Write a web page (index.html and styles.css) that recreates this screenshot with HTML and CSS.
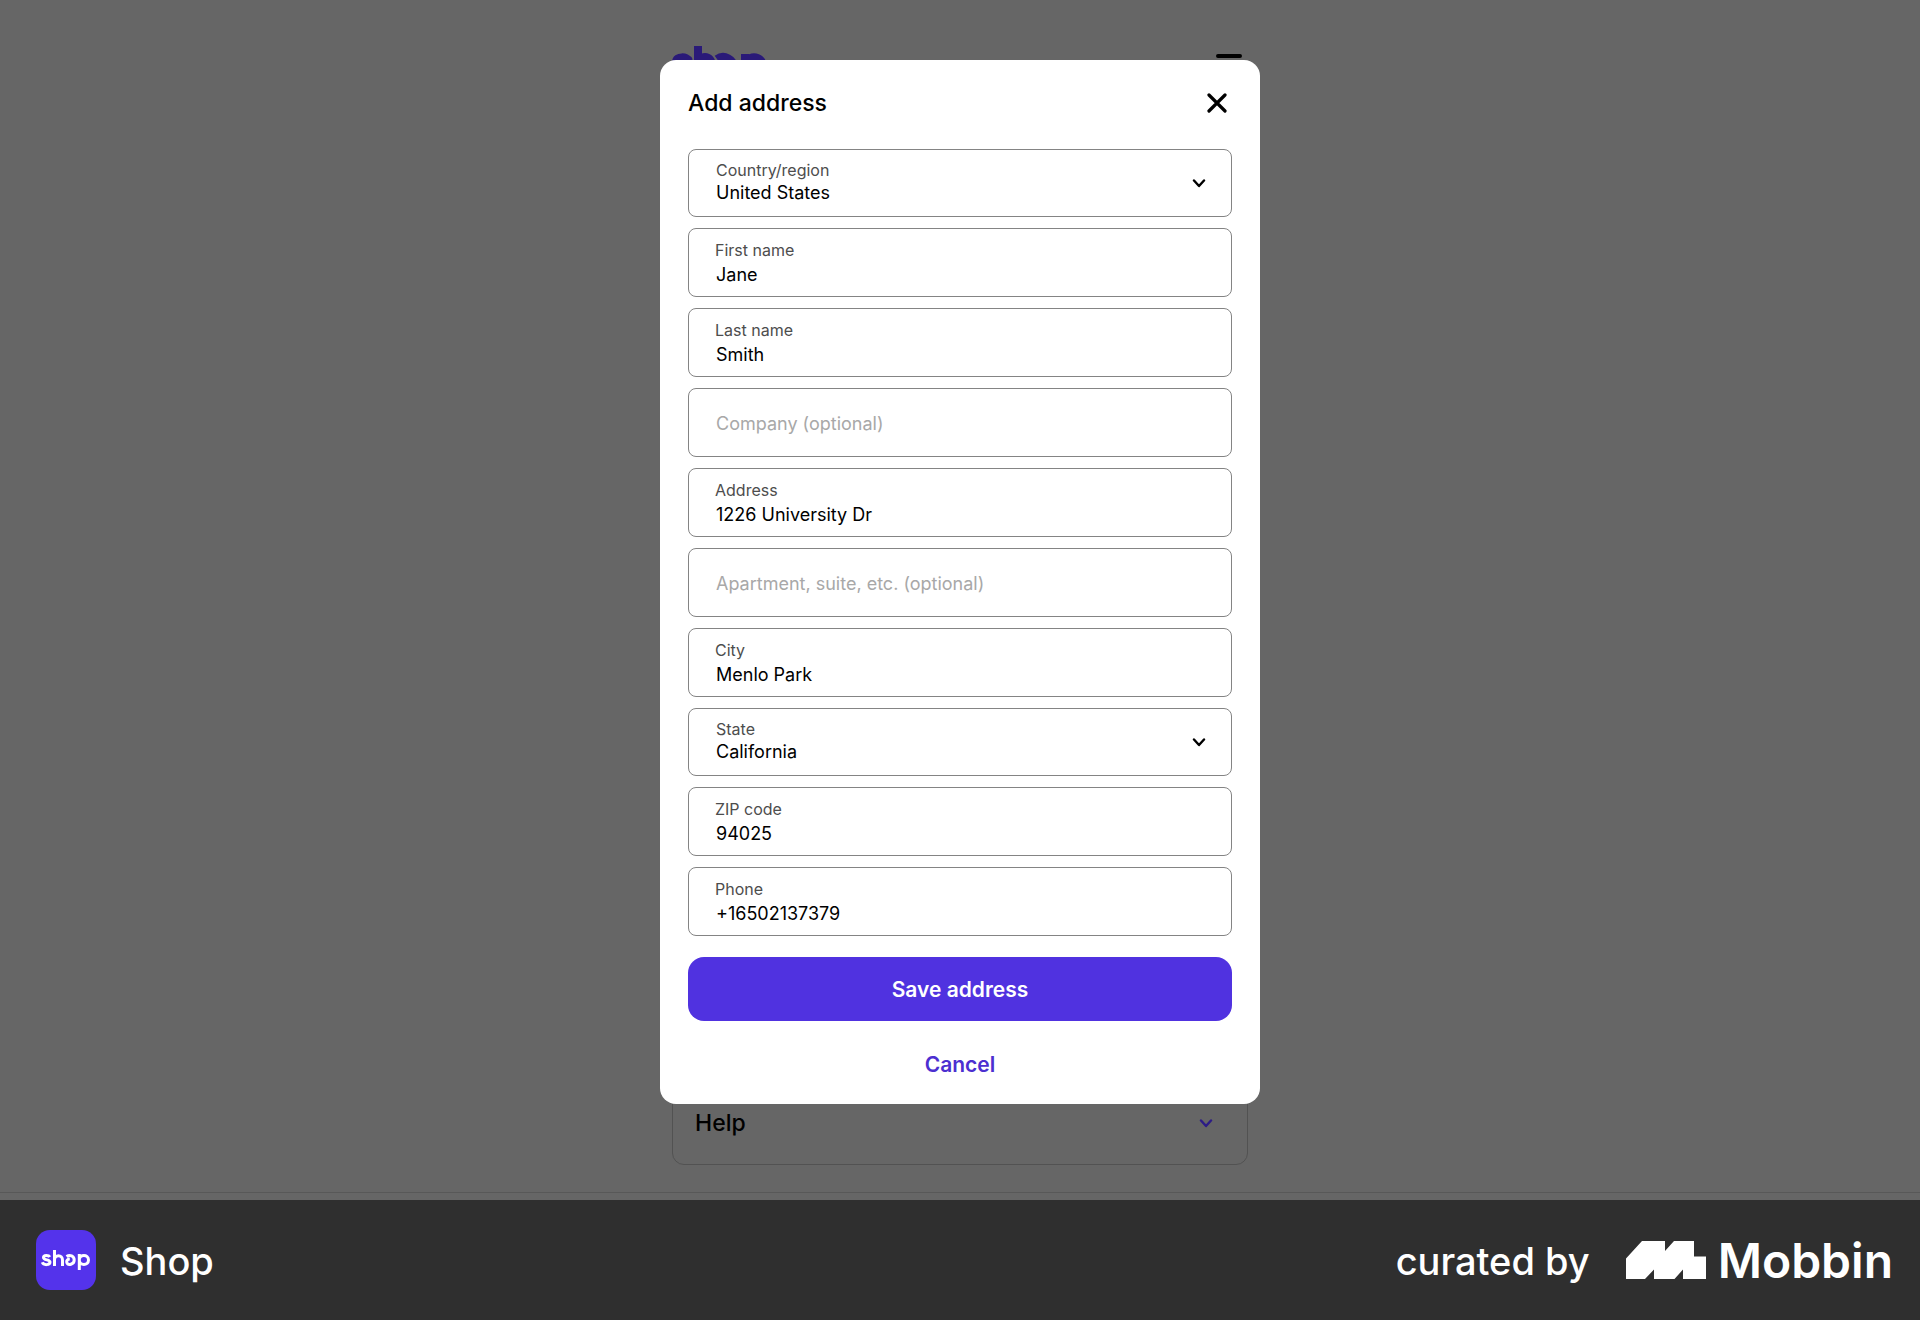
FILE: index.html
```html
<!DOCTYPE html>
<html lang="en">
  <head>
    <meta charset="UTF-8" />
    <meta name="viewport" content="width=device-width, initial-scale=1.0" />
    <title>Shop - Add address</title>
    <link rel="stylesheet" href="styles.css">
  </head>
  <body>
    <main class="screen">
      <!-- Account page behind the modal -->
      <div class="page">
        <header class="page-header">
          <a href="#" class="brand" aria-label="Shop">
            <svg class="brand-logo" viewBox="0 0 96 44" fill="none" stroke="currentColor" stroke-width="8">
              <path d="M17 15c-2-5-13-5-13 1 0 7 14 3 14 11 0 7-13 7-16 0" />
              <path d="M26 0v33M26 20c0-12 14-12 14 0v13" />
              <path d="M45 13c7-5 17 0 17 9s-13 12-16 4c-1-4 2-7 6-7" />
              <path d="M73 8v36M73 21c0-13 18-13 18 0s-18 12-18 0" />
            </svg>
          </a>
          <button class="menu-button" aria-label="Menu">
            <svg width="26" height="22" viewBox="0 0 26 22" stroke="currentColor" stroke-width="4" stroke-linecap="round">
              <path d="M2 2h22M2 11h22M2 20h22" />
            </svg>
          </button>
        </header>
        <button class="help-card">
          Help
          <svg width="14" height="9" viewBox="0 0 14 9" fill="none" stroke="#2c1c86" stroke-width="2.4" stroke-linecap="round" stroke-linejoin="round">
            <path d="M2 1.5l5 5.5 5-5.5" />
          </svg>
        </button>
      </div>

      <!-- Add address modal -->
      <div class="modal-overlay">
        <form class="modal" role="dialog" aria-labelledby="modal-title">
          <div class="modal-header">
            <h1 id="modal-title">Add address</h1>
            <button type="button" class="modal-close" aria-label="Close">
              <svg width="20" height="20" viewBox="0 0 20 20" stroke="currentColor" stroke-width="3.2" stroke-linecap="round">
                <path d="M2 2l16 16M18 2L2 18" />
              </svg>
            </button>
          </div>

          <div class="fields">
            <div class="field field-select">
              <label for="country">Country/region</label>
              <select id="country">
                <option>United States</option>
              </select>
              <svg class="chevron" width="14" height="9" viewBox="0 0 14 9">
                <path d="M2 1.5l5 5.5 5-5.5" />
              </svg>
            </div>
            <div class="field">
              <label for="first-name">First name</label>
              <input id="first-name" type="text" value="Jane" />
            </div>
            <div class="field">
              <label for="last-name">Last name</label>
              <input id="last-name" type="text" value="Smith" />
            </div>
            <div class="field field-empty">
              <input id="company" type="text" placeholder="Company (optional)" aria-label="Company (optional)" />
            </div>
            <div class="field">
              <label for="address">Address</label>
              <input id="address" type="text" value="1226 University Dr" />
            </div>
            <div class="field field-empty">
              <input id="apartment" type="text" placeholder="Apartment, suite, etc. (optional)" aria-label="Apartment, suite, etc. (optional)" />
            </div>
            <div class="field">
              <label for="city">City</label>
              <input id="city" type="text" value="Menlo Park" />
            </div>
            <div class="field field-select">
              <label for="state">State</label>
              <select id="state">
                <option>California</option>
              </select>
              <svg class="chevron" width="14" height="9" viewBox="0 0 14 9">
                <path d="M2 1.5l5 5.5 5-5.5" />
              </svg>
            </div>
            <div class="field">
              <label for="zip">ZIP code</label>
              <input id="zip" type="text" value="94025" />
            </div>
            <div class="field">
              <label for="phone">Phone</label>
              <input id="phone" type="tel" value="+16502137379" />
            </div>
          </div>

          <button type="submit" class="save-button">Save address</button>
          <button type="button" class="cancel-button">Cancel</button>
        </form>
      </div>
    </main>

    <footer class="credit-bar">
      <div class="app">
        <svg class="app-icon" width="60" height="60" viewBox="0 0 60 60" fill="none" stroke="#fff" stroke-width="3">
          <rect width="60" height="60" rx="14" fill="#5433eb" stroke="none" />
          <path d="M13.800 27c-1-2-6.300-2.300-6.300.5 0 3.200 6.500 1.500 6.500 4.500 0 3.400-6.500 3.500-7.700.3" />
          <path d="M18.500 20v16M18.500 30c0-5.800 8-5.800 8 0v6" />
          <path d="M30.500 26.500c3.500-2.400 7.700-.5 7.700 3.500 0 4.500-6.200 6-7.400 2.500-.6-2 1-3.500 3-3.500" />
          <path d="M43.300 24v16M43.300 30c0-5.900 9.200-5.900 9.200 0s-9.200 5.900-9.200 0" />
        </svg>
        <span class="app-name">Shop</span>
      </div>
      <div class="curator">
        <span class="curated-by">curated by</span>
        <svg class="mobbin-mark" width="80" height="38" viewBox="0 0 80 38" fill="#fff">
          <path d="M0 38V17.500L16 0h23v10l9-10h20v15.500h12.500V38H57V28.500L48.500 38H28v-9.500L19 38z" />
        </svg>
        <span class="mobbin-name">Mobbin</span>
      </div>
    </footer>
  </body>
</html>
```

FILE: styles.css
```css
:root {
  --page-bg: #666;
  --bar-bg: #2f2f2f;
  --accent-color: #5032e0;
  --border-color: #848484;
}
* {
  box-sizing: border-box;
}
body {
  margin: 0;
  min-height: 100vh;
  display: flex;
  flex-direction: column;
  font-family: Inter, "Liberation Sans", sans-serif;
  background: var(--bar-bg);
  color: #000;
}
button {
  font-family: inherit;
  border: none;
  background: none;
  padding: 0;
  color: inherit;
  cursor: pointer;
}
svg {
  display: block;
}

/* Page and modal share one grid cell, so the modal lies over the page */
.screen {
  flex: 1;
  display: grid;
  background: var(--page-bg);
}
.page,
.modal-overlay {
  grid-area: 1 / 1;
}
.page {
  display: flex;
  flex-direction: column;
  align-items: center;
  justify-content: space-between;
  margin-bottom: 7px;
  padding: 46px 16px 27px;
  border-bottom: 1px solid #585858;
}
.page-header {
  width: 100%;
  max-width: 576px;
  display: flex;
  justify-content: space-between;
  padding-right: 6px;
}
.brand {
  color: #2a1a78;
}
.brand-logo {
  width: 96px;
  height: 44px;
}
.menu-button {
  align-self: flex-start;
  padding-top: 8px;
}
.help-card {
  width: 100%;
  max-width: 576px;
  display: flex;
  justify-content: space-between;
  align-items: center;
  padding: 24px 34px 24px 22px;
  border: 1px solid #525252;
  border-radius: 12px;
  font-size: 23px;
  font-weight: 500;
  line-height: 34px;
}

/* Modal */
.modal-overlay {
  display: flex;
  justify-content: center;
  align-items: flex-start;
  padding: 60px 16px 96px;
}
.modal {
  width: 100%;
  max-width: 600px;
  display: flex;
  flex-direction: column;
  padding: 25px 28px 8px;
  background: #fff;
  border-radius: 16px;
}
.modal-header {
  display: flex;
  justify-content: space-between;
  align-items: center;
  padding-right: 5px;
  margin-bottom: 28px;
}
.modal-header h1 {
  margin: 0;
  font-size: 23px;
  font-weight: 500;
  line-height: 36px;
}
.fields {
  display: flex;
  flex-direction: column;
  gap: 11px;
}
.field {
  position: relative;
  display: flex;
  flex-direction: column;
  padding: 11px 26px 9px;
  border: 1px solid var(--border-color);
  border-radius: 8px;
}
.field label {
  color: #4d4d4d;
  font-size: 16px;
  line-height: 21px;
}
.field input,
.field select {
  width: 100%;
  height: 26px;
  margin: 0;
  padding: 0 1px;
  border: none;
  outline: none;
  appearance: none;
  background: transparent;
  color: #000;
  font-family: inherit;
  font-size: 18px;
}
.field input::placeholder {
  color: #a8a8a8;
}
.field-select {
  padding: 10px 27px 13px;
}
.field-select select {
  height: 22px;
  padding: 0;
}
.field-empty input {
  height: 47px;
}
.chevron {
  position: absolute;
  top: 29px;
  right: 25px;
  fill: none;
  stroke: #000;
  stroke-width: 2.4;
  stroke-linecap: round;
  stroke-linejoin: round;
  pointer-events: none;
}
.save-button,
.cancel-button {
  height: 64px;
  font-size: 21px;
  font-weight: 600;
}
.save-button {
  margin-top: 21px;
  border-radius: 16px;
  background: var(--accent-color);
  color: #fff;
}
.cancel-button {
  margin-top: 11px;
  color: #4c2fd0;
}

/* Bottom bar */
.credit-bar {
  height: 120px;
  display: flex;
  justify-content: space-between;
  align-items: center;
  padding: 0 27px 0 36px;
  background: var(--bar-bg);
  color: #fff;
}
.app,
.curator {
  display: flex;
  align-items: center;
}
.app {
  gap: 24px;
}
.app-name,
.curated-by {
  padding-top: 2px;
  font-size: 38px;
  font-weight: 500;
}
.mobbin-mark {
  margin: 0 12px 0 36px;
}
.mobbin-name {
  font-size: 48px;
  font-weight: 600;
}
```
